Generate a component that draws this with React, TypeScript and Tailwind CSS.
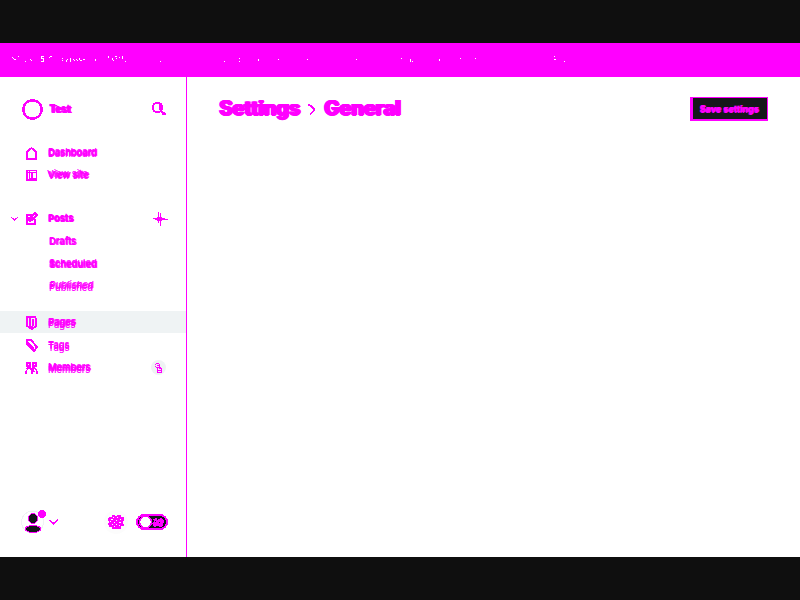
import React from 'react';

const specks: [number, number, number, number][] = [
  [12, 57, 1, 1], [13, 58, 1, 1], [14, 59, 2, 1], [18, 56, 1, 1], [25, 61, 1, 1],
  [30, 59, 1, 1], [31, 60, 1, 1], [41, 56, 3, 1], [41, 57, 1, 2], [42, 58, 2, 1], [43, 59, 1, 2], [41, 61, 3, 1],
  [49, 57, 1, 1], [50, 56, 2, 1], [62, 58, 1, 1], [62, 60, 1, 1], [66, 60, 1, 2], [67, 59, 1, 1], [70, 58, 1, 4],
  [73, 59, 1, 1], [74, 60, 1, 1], [76, 59, 1, 1], [77, 60, 1, 1], [79, 58, 1, 2], [80, 60, 2, 1], [83, 59, 2, 1],
  [95, 59, 1, 2], [108, 56, 1, 2], [112, 58, 1, 2], [113, 60, 1, 1], [115, 56, 2, 1], [116, 58, 1, 1],
  [119, 57, 1, 1], [122, 56, 1, 3], [125, 61, 1, 1], [160, 61, 1, 1], [224, 61, 1, 1], [239, 58, 1, 1],
  [239, 61, 1, 1], [258, 59, 1, 2], [278, 59, 1, 1], [307, 59, 1, 1], [356, 59, 1, 1], [401, 58, 1, 1],
  [410, 59, 1, 3], [412, 61, 1, 1], [439, 59, 1, 2], [460, 58, 1, 1], [475, 58, 1, 1], [554, 56, 1, 1],
  [554, 59, 2, 1], [564, 61, 1, 1],
];

function Icon({ children, className = 'stroke-2' }: { children: React.ReactNode; className?: string }) {
  return (
    <svg viewBox="0 0 16 16" shapeRendering="crispEdges" className={`h-4 w-4 shrink-0 fill-none stroke-[#ff00ff] ${className}`}>
      {children}
    </svg>
  );
}

function NavRow({ label, icon, className = '', text = '[text-shadow:1px_0_#ff00ff,0_1px_#ff00ff]', children }: {
  label: string; icon?: React.ReactNode; className?: string; text?: string; children?: React.ReactNode;
}) {
  return (
    <div className={`flex h-[22px] items-center pr-[18px] ${className}`}>
      <span className="ml-6 flex w-6 shrink-0">{icon}</span>
      <span className={`flex-1 text-[9.4px] leading-[12px] font-medium ${text}`}>{label}</span>
      {children}
    </div>
  );
}

export default function App() {
  return (
    <div className="flex h-[600px] w-[800px] flex-col overflow-hidden bg-[#0f0f0f] pt-[43px] font-['Inter',sans-serif] text-[#ff00ff]">
      <header className="h-[34px] shrink-0 bg-[#ff00ff]">
        <svg className="block h-[34px] w-[800px]" viewBox="0 43 800 34" shapeRendering="crispEdges">
          {specks.map(([x, y, w, h], i) => <rect key={i} x={x} y={y} width={w} height={h} fill="white" />)}
        </svg>
      </header>

      <div className="flex h-[480px] bg-white">
        <aside className="flex w-[187px] shrink-0 flex-col border-r border-[#ff00ff]">
          <div className="mt-[21px] flex h-[22px] items-center pr-[17px] pl-[22px]">
            <svg viewBox="0 0 21 21" shapeRendering="crispEdges" className="h-[21px] w-[21px] fill-none stroke-[#ff00ff] stroke-[2.5]">
              <circle cx="10.5" cy="10.5" r="9.2" />
            </svg>
            <span className="ml-1.5 flex-1 text-[10px] leading-3 font-bold [text-shadow:1px_0_#ff00ff,0_-1px_#ff00ff,2px_0_#ff00ff]">Test</span>
            <Icon className="mr-0.5 stroke-2">
              <circle cx="6.5" cy="6.5" r="4.7" />
              <path d="M9 3v6M9.5 9.5l5 4M11 13h4" />
            </Icon>
          </div>

          <nav className="mt-[22px]">
            <NavRow label="Dashboard" icon={<Icon><path d="M3 14V7l4.5-4L12 7v7Z" /></Icon>}
              text="[text-shadow:1px_0_#ff00ff,0_-1px_#ff00ff,0_1px_#ff00ff]" />
            <NavRow label="View site" icon={<Icon className="stroke-[1.6]"><path d="M3 3.5h9.5v9.5H3zM2 5.5h11M5.5 4v9M8 6v7M6 12h6" /></Icon>}
              text="[text-shadow:1px_0_#ff00ff,-1px_-1px_#ff00ff,0_1px_#ff00ff]" />

            <div className="mt-[22px] flex h-[22px] items-center pr-[18px]">
              <svg viewBox="0 0 8 6" shapeRendering="crispEdges" className="ml-[11px] h-[6px] w-2 fill-none stroke-[#ff00ff]">
                <path d="m0 1 3.5 3L7 1" />
              </svg>
              <span className="ml-[5px] flex w-6 shrink-0"><Icon><path d="M9 4H3v9h8V8M5 10l1-3 5-5 2 2-5 5-3 1M4 7h6" /></Icon></span>
              <span className="flex-1 text-[9.3px] leading-3 font-bold [text-shadow:1px_0_#ff00ff,0_-1px_#ff00ff]">Posts</span>
              <svg viewBox="0 0 16 16" shapeRendering="crispEdges" className="h-4 w-4 fill-[#ff00ff]">
                <path d="M6 1h1v11H6zM8 2h1v13H8zM1 7h12v1H1zM3 8h13v1H3zM5 6h5v4H5z" />
              </svg>
            </div>
            <NavRow label="Drafts" className="pl-px" text="[text-shadow:0_1px_#ff00ff,1px_1px_#ff00ff]" />
            <NavRow label="Scheduled" className="mt-px pl-px" text="[text-shadow:0_-1px_#ff00ff,0_1px_#ff00ff,1px_1px_#ff00ff]" />
            <NavRow label="Published" className="pl-px" text="[text-shadow:1px_-1px_#ff00ff,0_2px_#ff00ff]" />

            <NavRow label="Pages" className="mt-[14px] bg-[#eff3f4]" text="[text-shadow:1px_0_#ff00ff,0_1px_#ff00ff,0_3px_#ff00ff]"
              icon={<Icon><path d="M3 3h8l1 2v7l-4 3-5-3zM6 4v8l3 2M9 5v7" /></Icon>} />
            <NavRow label="Tags" className="mt-px" text="[text-shadow:0_1px_#ff00ff,0_3px_#ff00ff]"
              icon={<Icon><path d="M3 3h4l6 7-3 4-7-7zM4 6l6 6" /></Icon>} />
            <NavRow label="Members" text="[text-shadow:0_1px_#ff00ff,1px_1px_#ff00ff,0_3px_#ff00ff]"
              icon={<Icon className="stroke-[1.4]"><path d="M2 15v-3l3-3 3 3v3M8 12l3-3 2 3v3M3 4h3v3H3zM9 4h3v3H9zM2 10l3-2 6 5M8 9l4-2" /></Icon>}>
              <span className="mr-0.5 flex h-[15px] w-[15px] items-center justify-center rounded-full bg-[#eff3f4]">
                <svg viewBox="0 0 8 10" shapeRendering="crispEdges" className="mt-0.5 h-[10px] w-2 fill-[#ff00ff]">
                  <path d="M1 0h3v1H1zM0 1h1v1H0zM4 1h1v2H4zM2 2h2v1H2zM0 3h1v1H0zM4 3h1v2H4zM1 4h5v1H1zM2 5h1v5H2zM4 5h3v1H4zM6 6h1v4H6zM3 7h3v1H3zM3 9h3v1H3z" />
                </svg>
              </span>
            </NavRow>
          </nav>

          <footer className="mt-auto mb-[23px] flex h-6 items-center pr-[18px] pl-[21px]">
            <svg viewBox="0 0 26 24" shapeRendering="crispEdges" className="h-6 w-[26px]">
              <circle cx="11.5" cy="12" r="11" fill="none" stroke="#eff3f4" />
              <ellipse cx="12" cy="8.5" rx="4.5" ry="5" fill="#15171a" stroke="#ff00ff" />
              <ellipse cx="12" cy="19" rx="8" ry="3.5" fill="#15171a" stroke="#ff00ff" />
              <circle cx="21" cy="4" r="4" fill="#ff00ff" />
            </svg>
            <svg viewBox="0 0 10 6" shapeRendering="crispEdges" className="ml-0.5 h-[6px] w-[10px] fill-none stroke-[#ff00ff] stroke-[1.7]">
              <path d="m.5 1 4 3.5L9 1" />
            </svg>
            <span className="mr-2 ml-auto flex h-6 w-6 items-center justify-center rounded-full bg-[#fcfcfc]">
              <svg viewBox="0 0 16 16" shapeRendering="crispEdges" className="h-4 w-4">
                <path d="M4 1h3v1h2V1h4v2h3v4h-1v3h1v2h-3v3H4v-2H1v-2H0v-2h1V7H0V4h1V3h3Z" fill="#ff00ff" />
                <path d="M5 3h1v1H5zm4 0h1v1H9zM3 5h2v1H3zm5 1h1v1H8zm4-1h1v1h-1zM2 7h1v1H2zm4 1h1v1H6zm5 0h2v1h-2zM4 10h1v1H4zm4 0h1v1H8zm-2 2h1v1H6zm5-1h1v1h-1z" fill="#fcfcfc" />
              </svg>
            </span>
            <svg viewBox="0 0 32 16" shapeRendering="crispEdges" className="h-4 w-8">
              <rect x="1" y="1" width="30" height="14" rx="7" fill="#15171a" stroke="#ff00ff" strokeWidth="2" />
              <ellipse cx="9.5" cy="8" rx="6" ry="6" fill="white" stroke="#ff00ff" strokeWidth="1.5" />
              <path d="m17 5 3-1 2 1 3-1 3 3-1 5-3 1-2-1-4 1-2-4 2-2Z" fill="#ff00ff" />
              <path d="M19 7h1v1h-1zm2-2h1v1h-1zm2 3h1v1h-1z" fill="#15171a" />
            </svg>
          </footer>
        </aside>

        <main className="flex flex-1 items-start justify-between pt-5 pr-8 pl-8">
          <h1 className="flex items-center text-[20px] leading-[22px] font-bold [text-shadow:1px_0_#ff00ff,-1px_0_#ff00ff,1px_1px_#ff00ff,2px_0_#ff00ff,0_1px_#ff00ff]">
            <span className="w-[83px] whitespace-nowrap">Settings</span>
            <svg viewBox="0 0 10 12" shapeRendering="crispEdges" className="mx-[6px] mt-[3px] h-3 w-[10px] fill-none stroke-[#ff00ff] stroke-[1.2]">
              <path d="M0 1h2l4 5-4 5M3 1l4 5-5 5" />
            </svg>
            <span className="whitespace-nowrap">General</span>
          </h1>
          <button className="flex h-6 w-[78px] items-center justify-center border-t border-r border-b-2 border-l-[3px] border-[#ff00ff] bg-[#15171a] pt-px pr-0.5 text-[9px] leading-3 font-bold whitespace-nowrap [text-shadow:1px_0_#ff00ff,0_1px_#ff00ff]">
            Save settings
          </button>
        </main>
      </div>
    </div>
  );
}
